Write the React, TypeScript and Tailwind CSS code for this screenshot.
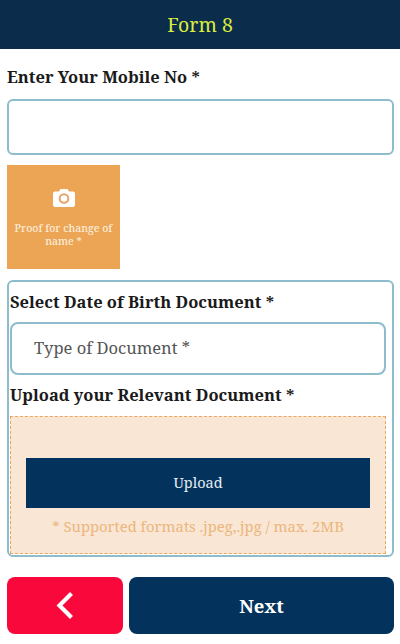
const serif = "font-['Noto_Serif','DejaVu_Serif',serif]";

function CameraIcon() {
    return (
        <svg width="22" height="19" viewBox="0 0 22 19">
            <path d="M2 3.500h4L7.500 1h7L16 3.500h4a2 2 0 0 1 2 2V17a2 2 0 0 1-2 2H2a2 2 0 0 1-2-2V5.500a2 2 0 0 1 2-2z" fill="#ffffff" />
            <circle cx="11" cy="10.500" r="4.300" fill="none" stroke="#e5a468" strokeWidth="2" />
        </svg>
    );
}

function BackIcon() {
    return (
        <svg width="18" height="29" viewBox="0 0 18 29">
            <path d="M15.500 2.500 3.500 14.500l12 12" fill="none" stroke="#ffffff" strokeWidth="4.200" />
        </svg>
    );
}

export default function App() {
    return (
        <div className={`w-[400px] h-[644px] bg-white flex flex-col overflow-hidden ${serif}`}>
            {/* Header */}
            <header className="h-[49px] shrink-0 bg-[#0b2c4a] flex items-center justify-center">
                <h1 className="text-[19.5px] leading-none text-[#d9ec3f]">Form 8</h1>
            </header>

            <main className="flex flex-col pl-[7px] pr-[6px] pt-[18px]">
                <label className="text-[16.5px] leading-[20px] font-bold text-[#1a1a1a]">Enter Your Mobile No *</label>
                <input className="mt-[12px] h-[56px] w-full rounded-[6px] border-2 border-[#8dbccd] bg-white outline-none" />

                {/* Photo tile */}
                <div className="mt-[10px] w-[113px] h-[104px] bg-[#eca455] flex flex-col items-center pt-[23px]">
                    <CameraIcon />
                    <p className="mt-[15px] px-1 text-center text-[10.5px] leading-[12.5px] font-medium text-[#fbeeda]">Proof for change of name *</p>
                </div>

                {/* Document card */}
                <section className="mt-[11px] h-[277px] rounded-[6px] border-2 border-[#8dbccd] pl-[1px] pr-[6px] pt-[10px] flex flex-col">
                    <h2 className="text-[16.5px] leading-[20px] font-bold text-[#1a1a1a]">Select Date of Birth Document *</h2>
                    <div className="mt-[10px] h-[53px] rounded-[8px] border-2 border-[#8dbccd] flex items-center pl-[22px] text-[16.5px] text-[#555555]">
                        Type of Document *
                    </div>
                    <h2 className="mt-[10px] text-[16.5px] leading-[20px] font-bold text-[#1a1a1a]">Upload your Relevant Document *</h2>
                    <div className="mt-[11px] mb-[1px] flex-1 border border-dashed border-[#e8a860] bg-[#f9e6d5] px-[15px] pt-[41px] flex flex-col">
                        <button className="h-[50px] w-full shrink-0 bg-[#03335c] text-[14.5px] text-[#e6eef3]">Upload</button>
                        <p className="mt-[9px] -mx-2 text-center text-[14.8px] leading-[18px] text-[#ecb67c]">* Supported formats .jpeg,.jpg / max. 2MB</p>
                    </div>
                </section>

                {/* Footer buttons */}
                <div className="mt-[20px] flex gap-[6px]">
                    <button className="w-[116px] h-[57px] rounded-[8px] bg-[#f9083c] flex items-center justify-center pr-[1px]">
                        <BackIcon />
                    </button>
                    <button className="flex-1 h-[57px] rounded-[8px] bg-[#03335c] text-[18.5px] font-bold text-white">Next</button>
                </div>
            </main>
        </div>
    );
}
